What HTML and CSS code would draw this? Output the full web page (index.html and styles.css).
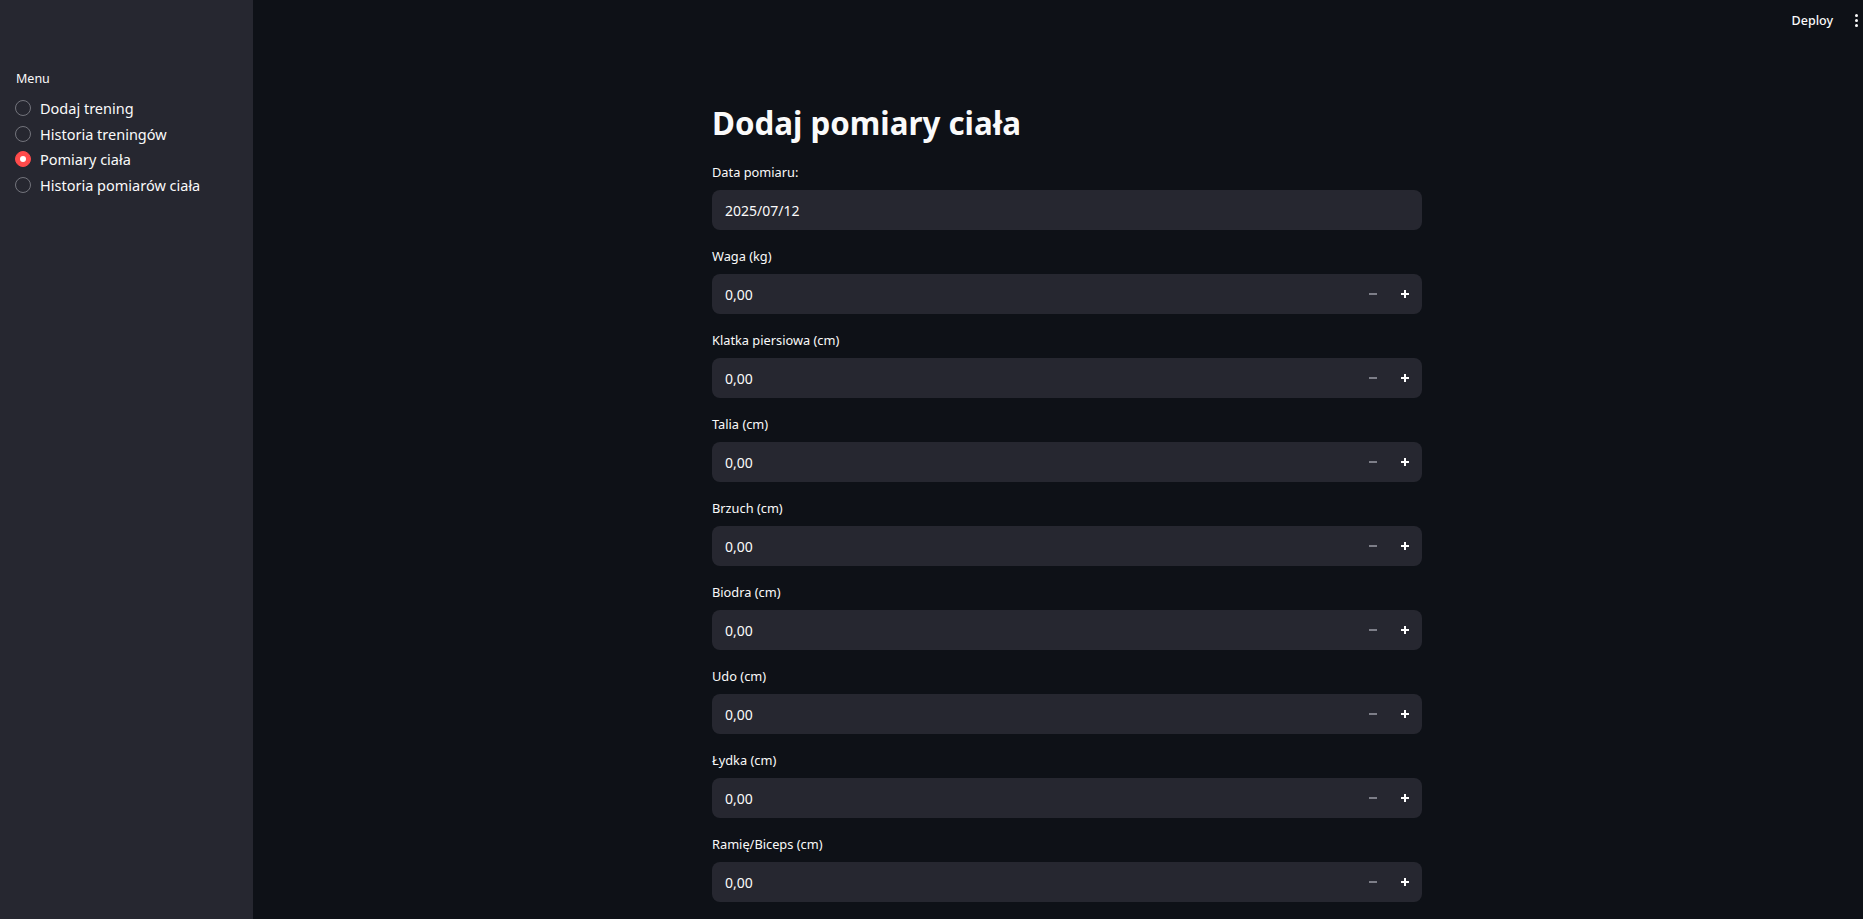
FILE: index.html
```html
<!DOCTYPE html>
<html lang="pl">
<head>
<meta charset="utf-8">
<title>Pomiary ciała</title>
<link rel="stylesheet" href="styles.css">
</head>
<body>
<div class="app">
  <aside class="sidebar">
    <div class="menu-label">Menu</div>
    <div class="radio-group">
      <label class="radio"><span class="circle"></span><span class="radio-text">Dodaj trening</span></label>
      <label class="radio"><span class="circle"></span><span class="radio-text">Historia treningów</span></label>
      <label class="radio selected"><span class="circle"></span><span class="radio-text">Pomiary ciała</span></label>
      <label class="radio"><span class="circle"></span><span class="radio-text">Historia pomiarów ciała</span></label>
    </div>
  </aside>
  <main class="main">
    <header class="toolbar">
      <span class="deploy">Deploy</span>
      <span class="kebab"><i></i><i></i><i></i></span>
    </header>
    <div class="content">
      <h2 class="title">Dodaj pomiary ciała</h2>
      <div class="field">
        <div class="label">Data pomiaru:</div>
        <div class="input"><span class="value">2025/07/12</span></div>
      </div>
      <div class="field">
        <div class="label">Waga (kg)</div>
        <div class="input"><span class="value">0,00</span><span class="steps"><span class="step minus"></span><span class="step plus"></span></span></div>
      </div>
      <div class="field">
        <div class="label">Klatka piersiowa (cm)</div>
        <div class="input"><span class="value">0,00</span><span class="steps"><span class="step minus"></span><span class="step plus"></span></span></div>
      </div>
      <div class="field">
        <div class="label">Talia (cm)</div>
        <div class="input"><span class="value">0,00</span><span class="steps"><span class="step minus"></span><span class="step plus"></span></span></div>
      </div>
      <div class="field">
        <div class="label">Brzuch (cm)</div>
        <div class="input"><span class="value">0,00</span><span class="steps"><span class="step minus"></span><span class="step plus"></span></span></div>
      </div>
      <div class="field">
        <div class="label">Biodra (cm)</div>
        <div class="input"><span class="value">0,00</span><span class="steps"><span class="step minus"></span><span class="step plus"></span></span></div>
      </div>
      <div class="field">
        <div class="label">Udo (cm)</div>
        <div class="input"><span class="value">0,00</span><span class="steps"><span class="step minus"></span><span class="step plus"></span></span></div>
      </div>
      <div class="field">
        <div class="label">Łydka (cm)</div>
        <div class="input"><span class="value">0,00</span><span class="steps"><span class="step minus"></span><span class="step plus"></span></span></div>
      </div>
      <div class="field">
        <div class="label">Ramię/Biceps (cm)</div>
        <div class="input"><span class="value">0,00</span><span class="steps"><span class="step minus"></span><span class="step plus"></span></span></div>
      </div>
    </div>
  </main>
</div>
</body>
</html>
```

FILE: styles.css
```css
html, body {
  margin: 0;
  padding: 0;
  height: 100%;
  overflow: hidden;
  background: #0e1117;
}
body {
  font-family: "Source Sans Pro", "Noto Sans", sans-serif;
  color: #fafafa;
}
.app {
  display: flex;
  height: 100vh;
}
.sidebar {
  width: 253px;
  flex: none;
  background: #262730;
  box-sizing: border-box;
  padding: 68.5px 16px 0 15px;
}
.menu-label {
  font-size: 12.5px;
  line-height: 20px;
  margin-bottom: 7px;
  padding-left: 1px;
}
.radio-group {
  display: flex;
  flex-direction: column;
}
.radio {
  display: flex;
  align-items: center;
  height: 25.5px;
  gap: 9px;
}
.circle {
  width: 16px;
  height: 16px;
  box-sizing: border-box;
  border-radius: 50%;
  border: 1px solid #73747c;
  flex: none;
  position: relative;
}
.radio.selected .circle {
  background: #ff4b4b;
  border-color: #ff4b4b;
}
.radio.selected .circle::after {
  content: "";
  position: absolute;
  left: 4px;
  top: 4px;
  width: 6px;
  height: 6px;
  border-radius: 50%;
  background: #ffffff;
}
.radio-text {
  font-size: 14.5px;
  line-height: 20px;
}
.main {
  flex: 1;
  display: flex;
  flex-direction: column;
  min-width: 0;
  padding-left: 18px;
}
.toolbar {
  display: flex;
  justify-content: flex-end;
  align-items: center;
  height: 42px;
  padding-right: 5px;
  gap: 22px;
  box-sizing: border-box;
  margin-top: -1px;
}
.deploy {
  font-size: 12.5px;
  font-weight: 500;
}
.kebab {
  display: flex;
  flex-direction: column;
  gap: 2px;
}
.kebab i {
  display: block;
  width: 3px;
  height: 3px;
  border-radius: 50%;
  background: #fafafa;
}
.content {
  width: 710px;
  margin: 0 auto;
  display: flex;
  flex-direction: column;
  gap: 16px;
  padding-top: 63px;
}
.title {
  margin: 0 0 4px;
  font-size: 31.3px;
  font-weight: 700;
  line-height: 38px;
}
.label {
  font-size: 12.8px;
  height: 24px;
  line-height: 20px;
  margin-bottom: 4px;
}
.input {
  height: 40px;
  border-radius: 8px;
  background: #262730;
  display: flex;
  align-items: center;
  padding-left: 13px;
}
.value {
  flex: 1;
  font-size: 14px;
}
.steps {
  display: flex;
  height: 100%;
  margin-right: 1px;
}
.step {
  width: 32px;
  height: 100%;
  position: relative;
}
.step::before, .step::after {
  content: "";
  position: absolute;
  left: 12px;
  top: 19px;
  width: 8px;
  height: 2px;
}
.minus::before {
  background: #7d7e88;
}
.minus::after {
  display: none;
}
.plus::before {
  background: #ffffff;
}
.plus::after {
  background: #ffffff;
  left: 15px;
  top: 16px;
  width: 2px;
  height: 8px;
}
```
